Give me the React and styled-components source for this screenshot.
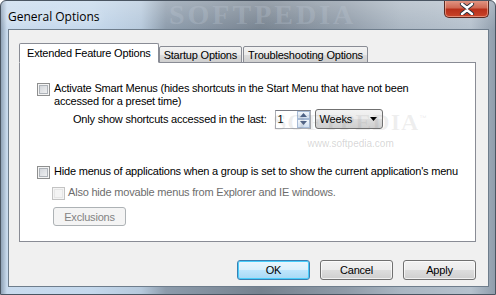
import styled, { createGlobalStyle } from "styled-components";

const GlobalStyle = createGlobalStyle`
  html, body {
    margin: 0;
    padding: 0;
    overflow: hidden;
    background: #fff;
  }
`;

function App() {
  return (
    <>
      <GlobalStyle />
      <Window>
        <TitleBar>
          <Title>General Options</Title>
          <TitleMark>SOFTPEDIA</TitleMark>
          <CloseButton>
            <svg width="16" height="12" viewBox="0 0 16 12">
              <path
                d="M3 1 L8 5 L13 1 M3 11 L8 7 L13 11"
                stroke="#2b3440"
                strokeWidth="4.2"
                fill="none"
                strokeLinecap="round"
              />
              <path
                d="M3 1 L8 5 L13 1 M3 11 L8 7 L13 11"
                stroke="#ffffff"
                strokeWidth="2.4"
                fill="none"
                strokeLinecap="round"
              />
            </svg>
          </CloseButton>
        </TitleBar>
        <Client>
          <TabRow>
            <Tab $active>Extended Feature Options</Tab>
            <Tab>Startup Options</Tab>
            <Tab>Troubleshooting Options</Tab>
          </TabRow>
          <Panel>
            <CheckRow>
              <Checkbox />
              <Label>
                Activate Smart Menus (hides shortcuts in the Start Menu that have not been
                <br />
                accessed for a preset time)
              </Label>
            </CheckRow>
            <ShowRow>
              <Label>Only show shortcuts accessed in the last:</Label>
              <Spin>
                <SpinText>1</SpinText>
                <SpinButtons>
                  <SpinHalf>
                    <svg width="7" height="4" viewBox="0 0 7 4">
                      <path d="M0 4 L3.5 0 L7 4 Z" fill="#4d6185" />
                    </svg>
                  </SpinHalf>
                  <SpinHalf>
                    <svg width="7" height="4" viewBox="0 0 7 4">
                      <path d="M0 0 L3.5 4 L7 0 Z" fill="#4d6185" />
                    </svg>
                  </SpinHalf>
                </SpinButtons>
              </Spin>
              <Select>
                <span>Weeks</span>
                <svg width="7" height="4" viewBox="0 0 7 4">
                  <path d="M0 0 L3.5 4 L7 0 Z" fill="#000" />
                </svg>
              </Select>
              <ContentMark>
                <MarkWord>
                  SOFTPEDIA<sup>™</sup>
                </MarkWord>
                <MarkUrl>www.softpedia.com</MarkUrl>
              </ContentMark>
            </ShowRow>
            <CheckRow $top={36}>
              <Checkbox />
              <Label>
                Hide menus of applications when a group is set to show the current application's menu
              </Label>
            </CheckRow>
            <SubRow>
              <Checkbox $disabled />
              <Label $disabled>Also hide movable menus from Explorer and IE windows.</Label>
            </SubRow>
            <Exclusions>Exclusions</Exclusions>
          </Panel>
          <ButtonRow>
            <DialogButton $default>OK</DialogButton>
            <DialogButton>Cancel</DialogButton>
            <DialogButton>Apply</DialogButton>
          </ButtonRow>
        </Client>
      </Window>
    </>
  );
}

const Window = styled.div`
  position: relative;
  width: 496px;
  height: 295px;
  box-sizing: border-box;
  display: flex;
  flex-direction: column;
  overflow: hidden;
  border-radius: 6px 6px 0 0;
  border: 1px solid #4a5562;
  background:
    linear-gradient(180deg, rgba(255, 255, 255, 0.25) 0px, rgba(255, 255, 255, 0) 30px),
    linear-gradient(
      90deg,
      #8fa2b6 0px,
      #c9dbee 6px,
      #c4d8ec 90px,
      #b6c9dc 140px,
      #8c9bab 165px,
      #76828f 260px,
      #8f9ba8 345px,
      #aab6c2 400px,
      #b5c1cd 470px,
      #8c9aa9 496px
    );
  font-family: "Liberation Sans", Arial, sans-serif;
  font-size: 11px;
  letter-spacing: -0.2px;
  color: #000;
`;

const TitleBar = styled.div`
  position: relative;
  height: 28px;
  display: flex;
  justify-content: space-between;
  align-items: flex-start;
  padding-left: 7px;
  padding-right: 6px;
`;

const Title = styled.div`
  padding-top: 7px;
  font-family: "Open Sans", "Noto Sans", sans-serif;
  font-size: 12px;
  letter-spacing: 0;
  color: #000;
  text-shadow: 0 0 8px rgba(255, 255, 255, 0.9);
`;

const TitleMark = styled.div`
  position: absolute;
  left: 168px;
  top: 2px;
  line-height: 24px;
  font-family: "Liberation Serif", serif;
  font-weight: bold;
  font-size: 28px;
  letter-spacing: 3px;
  color: rgba(190, 200, 212, 0.3);
  pointer-events: none;
`;

const CloseButton = styled.div`
  width: 45px;
  height: 18px;
  margin-top: -1px;
  box-sizing: border-box;
  display: flex;
  align-items: center;
  justify-content: center;
  border: 1px solid #5a2a22;
  border-top: none;
  border-radius: 0 0 5px 5px;
  background: linear-gradient(180deg, #e39a88 0%, #d06a55 45%, #b8301a 55%, #c9452a 100%);
  box-shadow: inset 0 0 0 1px rgba(255, 210, 190, 0.5);
`;

const Client = styled.div`
  flex: 1;
  margin: 0 6px 7px 7px;
  box-sizing: border-box;
  border: 1px solid #6e7d8c;
  background: #f0f0f0;
  padding: 13px 0 0 10px;
  display: flex;
  flex-direction: column;
`;

const TabRow = styled.div`
  display: flex;
  align-items: flex-end;
  height: 20px;
  position: relative;
  z-index: 1;
  margin-bottom: -1px;
`;

const Tab = styled.div`
  box-sizing: border-box;
  height: ${(p) => (p.$active ? "20px" : "17px")};
  padding: 0 ${(p) => (p.$active ? "7px" : "4px")};
  margin-right: ${(p) => (p.$active ? "0" : "1px")};
  display: flex;
  align-items: center;
  border: 1px solid #898c95;
  border-bottom: ${(p) => (p.$active ? "1px solid #fff" : "1px solid #898c95")};
  background: ${(p) =>
    p.$active ? "#ffffff" : "linear-gradient(180deg, #f2f2f2 0%, #ebebeb 50%, #dddddd 51%, #cfcfcf 100%)"};
  border-radius: 2px 2px 0 0;
  padding-top: ${(p) => (p.$active ? "0" : "1px")};
`;

const Panel = styled.div`
  position: relative;
  width: 457px;
  height: 180px;
  box-sizing: border-box;
  border: 1px solid #898c95;
  background: #ffffff;
  padding: 19px 0 0 17px;
  display: flex;
  flex-direction: column;
  align-items: flex-start;
`;

const CheckRow = styled.div`
  display: flex;
  align-items: flex-start;
  gap: 4px;
  margin-top: ${(p) => (p.$top ? `${p.$top}px` : "0")};
`;

const Checkbox = styled.span`
  flex: none;
  width: 13px;
  height: 13px;
  box-sizing: border-box;
  margin-top: 1px;
  border: 1px solid ${(p) => (p.$disabled ? "#c3c3c3" : "#8e8f8f")};
  background: ${(p) =>
    p.$disabled
      ? "#f4f4f4"
      : "linear-gradient(135deg, #cbcfd5 0%, #f6f6f6 100%)"};
  box-shadow: inset 0 0 0 1px #f4f4f4,
    inset 0 0 0 2px ${(p) => (p.$disabled ? "#e6e6e6" : "#aeb3b9")};
`;

const Label = styled.span`
  line-height: 13px;
  white-space: nowrap;
  color: ${(p) => (p.$disabled ? "#6d6d6d" : "#000")};
`;

const ShowRow = styled.div`
  position: relative;
  display: flex;
  align-items: center;
  margin-top: 1px;
  margin-left: 36px;
  height: 20px;
`;

const Spin = styled.div`
  display: flex;
  height: 19px;
  margin-left: 8px;
  box-sizing: border-box;
  border: 1px solid #abadb3;
  border-top-color: #7a7d86;
  background: #fff;
`;

const SpinText = styled.div`
  width: 21px;
  padding-left: 2px;
  box-sizing: border-box;
  display: flex;
  align-items: center;
`;

const SpinButtons = styled.div`
  width: 13px;
  display: flex;
  flex-direction: column;
`;

const SpinHalf = styled.div`
  flex: 1;
  display: flex;
  align-items: center;
  justify-content: center;
  box-sizing: border-box;
  border: 1px solid #a7bbd6;
  background: linear-gradient(180deg, #f1f6fb 0%, #d3e0ef 100%);
`;

const Select = styled.div`
  width: 68px;
  height: 20px;
  margin-left: 4px;
  box-sizing: border-box;
  display: flex;
  align-items: center;
  justify-content: space-between;
  padding: 0 5px 0 4px;
  border: 1px solid #707070;
  border-radius: 3px;
  background: linear-gradient(180deg, #f2f2f2 0%, #ebebeb 50%, #dddddd 51%, #cfcfcf 100%);
`;

const ContentMark = styled.div`
  position: absolute;
  left: 200px;
  top: -2px;
  display: flex;
  flex-direction: column;
  align-items: center;
  pointer-events: none;
`;

const MarkWord = styled.div`
  font-family: "Liberation Serif", serif;
  font-weight: bold;
  font-size: 24px;
  line-height: 24px;
  letter-spacing: 1px;
  color: rgba(120, 120, 120, 0.12);

  sup {
    font-size: 8px;
    font-family: "Liberation Sans", sans-serif;
  }
`;

const MarkUrl = styled.div`
  margin-top: 4px;
  font-size: 10px;
  line-height: 11px;
  letter-spacing: 0;
  color: rgba(120, 120, 120, 0.3);
`;

const SubRow = styled(CheckRow)`
  margin-top: 7px;
  margin-left: 15px;
  gap: 3px;
`;

const Exclusions = styled.div`
  margin-top: 7px;
  margin-left: 16px;
  width: 73px;
  height: 19px;
  box-sizing: border-box;
  display: flex;
  align-items: center;
  justify-content: center;
  border: 1px solid #adb2b5;
  border-radius: 3px;
  background: #f4f4f4;
  color: #838383;
`;

const ButtonRow = styled.div`
  display: flex;
  justify-content: flex-end;
  gap: 10px;
  width: 457px;
  margin-top: 18px;
`;

const DialogButton = styled.div`
  width: 73px;
  height: 20px;
  box-sizing: border-box;
  display: flex;
  align-items: center;
  justify-content: center;
  border-radius: 3px;
  border: 1px solid ${(p) => (p.$default ? "#3c7fb1" : "#707070")};
  background: ${(p) =>
    p.$default
      ? "linear-gradient(180deg, #eaf6fd 0%, #d9f0fc 50%, #bee6fd 51%, #a7d9f5 100%)"
      : "linear-gradient(180deg, #f2f2f2 0%, #ebebeb 50%, #dddddd 51%, #cfcfcf 100%)"};
  box-shadow: inset 0 0 0 1px ${(p) => (p.$default ? "#48cdfb" : "rgba(255,255,255,0.7)")};
`;

export default App;
